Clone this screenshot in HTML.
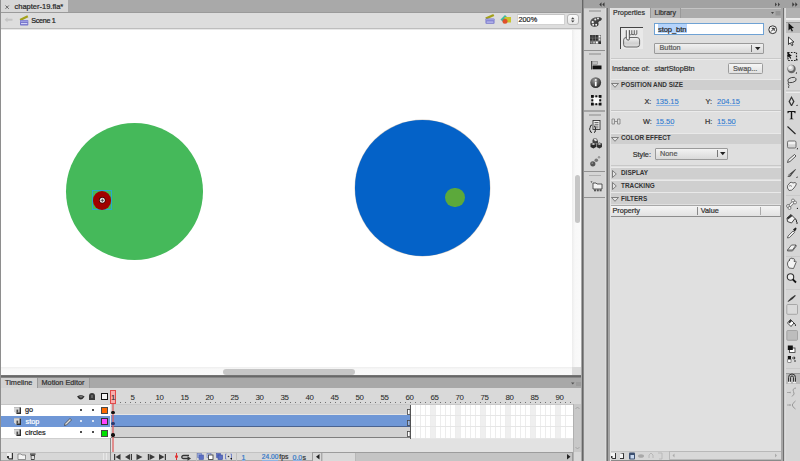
<!DOCTYPE html>
<html><head><meta charset="utf-8">
<style>
*{margin:0;padding:0;box-sizing:border-box}
html,body{width:800px;height:461px;overflow:hidden;background:#d9d9d9;font-family:"Liberation Sans",sans-serif;font-size:7.3px;color:#2b2b2b}
.a{position:absolute}
.t{position:absolute;white-space:nowrap;line-height:1;-webkit-text-stroke:0.22px currentColor}
.hd{position:absolute;left:610px;width:171px;background:#cfcfcf;border-top:1px solid #e9e9e9}
.hdt{position:absolute;white-space:nowrap;line-height:1;font-weight:bold;font-size:6.4px;color:#333;left:621px}
.tri{position:absolute;left:612px}
.val{position:absolute;white-space:nowrap;line-height:1;font-size:7.5px;color:#2f7ad0;border-bottom:1px solid #8fb5e3;-webkit-text-stroke:0.1px currentColor}
svg{position:absolute;overflow:visible}
</style></head><body>
<!-- ============ DOCUMENT AREA ============ -->
<div class="a" style="left:0;top:0;width:582px;height:376px;background:#fff"></div>
<div class="a" style="left:0;top:0;width:1px;height:461px;background:#8e8e8e"></div>
<!-- tab bar -->
<div class="a" style="left:1px;top:0;width:581px;height:13px;background:#a9a9a9"></div>
<div class="a" style="left:1px;top:0;width:67px;height:12px;background:#d7d7d7"></div>
<div class="a" style="left:1px;top:12px;width:581px;height:1px;background:#9a9a9a"></div>
<svg style="left:5px;top:4.8px" width="5" height="5"><path d="M0.5 0.5L3.8 3.8M3.8 0.5L0.5 3.8" stroke="#666" stroke-width="1"/></svg>
<div class="t" style="left:14.5px;top:2.6px;font-size:7.5px;color:#2a2a2a">chapter-19.fla*</div>
<!-- scene bar -->
<div class="a" style="left:1px;top:13px;width:581px;height:16px;background:#dddddd"></div>
<div class="a" style="left:1px;top:28px;width:581px;height:1px;background:#bdbdbd"></div>
<div class="a" style="left:1px;top:29px;width:581px;height:1px;background:#e8e8e8"></div>
<svg style="left:4px;top:17px" width="9" height="6"><path d="M0.5 2.8L3.5 0.3V1.8H8.5V3.8H3.5V5.3Z" fill="#c4c4c4"/></svg>
<svg style="left:19px;top:14.5px" width="10" height="11"><path d="M0.6 4L8.3 0.3L9.3 2.2L1.6 5.9Z" fill="#a3a01a"/><rect x="1" y="5" width="8.3" height="5.6" rx="0.8" fill="#7474cc"/><rect x="1.5" y="5.5" width="7.3" height="1.6" fill="#9c9ce0"/><rect x="2" y="8.2" width="6.3" height="0.9" fill="#e8e8ff"/></svg>
<div class="t" style="left:31.3px;top:17.3px;font-size:7.2px;color:#222;letter-spacing:-0.3px">Scene 1</div>
<!-- scene bar right icons -->
<svg style="left:485px;top:14px" width="10" height="10"><path d="M0.3 3.6L8.3 0L9.3 1.9L1.3 5.5Z" fill="#a3a01a"/><rect x="0.5" y="4.5" width="9" height="5.3" rx="0.8" fill="#7474cc"/><rect x="1" y="5" width="8" height="1.5" fill="#9c9ce0"/><rect x="1.5" y="7.6" width="7" height="0.9" fill="#e8e8ff"/></svg>
<svg style="left:500px;top:14px" width="12" height="10"><path d="M0.5 5.5L5 1L7 3L2.5 7.5Z" fill="#3fb7a0"/><rect x="4.5" y="3" width="6.5" height="5.5" fill="#c8c42a"/><circle cx="5" cy="7.2" r="2.5" fill="#e0502a"/></svg>
<!-- stage scrollbars -->
<div class="a" style="left:572px;top:30px;width:10px;height:337px;background:linear-gradient(90deg,#ededed,#f8f8f8 30%,#fafafa)"></div>
<div class="a" style="left:575px;top:175px;width:5px;height:48px;background:#c6c6c6;border-radius:3px"></div>
<div class="a" style="left:1px;top:367px;width:571px;height:8px;background:linear-gradient(180deg,#eeeeee,#f8f8f8 30%,#fafafa)"></div>
<div class="a" style="left:222.5px;top:369px;width:132px;height:5.5px;background:#c6c6c6;border-radius:3px"></div>
<div class="a" style="left:572px;top:367px;width:9px;height:8.5px;background:#dcdcdc"></div>
<!-- zoom -->
<div class="a" style="left:517px;top:14px;width:48px;height:11px;background:#fff;border:1px solid #d2d2d2;border-top-color:#c4c4c4"></div>
<div class="t" style="left:518.5px;top:16px;font-size:7.3px;color:#2a2a2a">200%</div>
<div class="a" style="left:567px;top:14px;width:12px;height:11px;background:linear-gradient(#fbfbfb,#e8e8e8);border:1px solid #b5b5b5;border-radius:3px"></div>
<svg style="left:571px;top:16.5px" width="4" height="6"><path d="M0 2.3L1.75 0.3L3.5 2.3ZM0 3.5L1.75 5.5L3.5 3.5Z" fill="#444"/></svg>

<!-- stage objects -->
<div class="a" style="left:65.8px;top:123px;width:137.3px;height:137.3px;border-radius:50%;background:#45b95a"></div>
<div class="a" style="left:92px;top:190px;width:20px;height:20px;border:1px solid #2aa9c9"></div>
<div class="a" style="left:92.8px;top:191px;width:18.5px;height:18.5px;border-radius:50%;background:#a00000"></div>
<svg style="left:98px;top:196px" width="9" height="9"><circle cx="4.3" cy="4.3" r="3.3" fill="#3a0000"/><circle cx="4.3" cy="4.3" r="2.5" fill="#f2f2f2"/><path d="M2.6 4.3H6M4.3 2.6V6" stroke="#333" stroke-width="0.8"/></svg>
<div class="a" style="left:354.5px;top:120.3px;width:135.7px;height:135.7px;border-radius:50%;background:#0462c8;box-shadow:0 0 0.6px 0.4px rgba(150,130,110,0.45)"></div>
<div class="a" style="left:445.3px;top:187.9px;width:19.5px;height:19.5px;border-radius:50%;background:#5ca93b"></div>

<!-- ============ DIVIDER ============ -->
<div class="a" style="left:581px;top:0;width:1px;height:461px;background:#a8a8a8"></div><div class="a" style="left:582px;top:0;width:1px;height:461px;background:#666"></div><div class="a" style="left:583px;top:0;width:1px;height:461px;background:#8c8c8c"></div><div class="a" style="left:584px;top:8px;width:1px;height:453px;background:#dadada"></div>

<!-- ============ TIMELINE ============ -->
<div class="a" style="left:1px;top:375.3px;width:580px;height:2.7px;background:linear-gradient(#7a7a7a,#666 55%,#9a9a9a)"></div>
<div class="a" style="left:1px;top:378px;width:580px;height:10.5px;background:#a8a8a8"></div>
<div class="a" style="left:1px;top:378px;width:36px;height:10.5px;background:#d3d3d3"></div>
<div class="a" style="left:37px;top:378px;width:53px;height:10.5px;background:#b9b9b9;border-left:1px solid #9a9a9a;border-right:1px solid #9a9a9a"></div>
<div class="t" style="left:5px;top:379px;color:#333">Timeline</div>
<div class="t" style="left:41.5px;top:379px;color:#333">Motion Editor</div>
<svg style="left:571px;top:382px" width="10" height="4"><path d="M0 0.5H3.5L1.75 2.5Z" fill="#555"/><rect x="5" y="0" width="5" height="4" fill="#9c9c9c"/></svg>
<div class="a" style="left:1px;top:388.3px;width:580px;height:16.2px;background:#d9d9d9"></div>
<div class="a" style="left:1px;top:403.6px;width:109px;height:0.9px;background:#c6c6c6"></div>
<div class="a" style="left:1px;top:438px;width:572px;height:14px;background:#e2e2e2"></div>
<!-- header icons -->
<svg style="left:76.5px;top:393.5px" width="8" height="6"><path d="M0 2.4Q3.8 -0.6 7.6 2.4Q5.5 5.5 3.8 5.5Q2 5.5 0 2.4Z" fill="#2e2e2e"/><ellipse cx="4" cy="2.6" rx="1.6" ry="1.2" fill="#777"/></svg>
<svg style="left:89px;top:393px" width="6" height="7"><path d="M0 7V3Q0 0 3 0Q6 0 6 3V7Z" fill="#3a3a3a"/><rect x="2.3" y="2" width="1.4" height="3" fill="#777"/></svg>
<div class="a" style="left:100.8px;top:393.4px;width:7px;height:7px;border:1.5px solid #111;background:#f4f4f4"></div>
<!-- ruler -->
<div class="a" style="left:120px;top:401.6px;width:0.9px;height:1.6px;background:#707070"></div>
<div class="a" style="left:125px;top:401.6px;width:0.9px;height:1.6px;background:#707070"></div>
<div class="a" style="left:130px;top:401.6px;width:0.9px;height:1.6px;background:#707070"></div>
<div class="a" style="left:135px;top:401.6px;width:0.9px;height:1.6px;background:#707070"></div>
<div class="a" style="left:140px;top:401.6px;width:0.9px;height:1.6px;background:#707070"></div>
<div class="a" style="left:145px;top:401.6px;width:0.9px;height:1.6px;background:#707070"></div>
<div class="a" style="left:150px;top:401.6px;width:0.9px;height:1.6px;background:#707070"></div>
<div class="a" style="left:155px;top:401.6px;width:0.9px;height:1.6px;background:#707070"></div>
<div class="a" style="left:160px;top:401.6px;width:0.9px;height:1.6px;background:#707070"></div>
<div class="a" style="left:165px;top:401.6px;width:0.9px;height:1.6px;background:#707070"></div>
<div class="a" style="left:170px;top:401.6px;width:0.9px;height:1.6px;background:#707070"></div>
<div class="a" style="left:175px;top:401.6px;width:0.9px;height:1.6px;background:#707070"></div>
<div class="a" style="left:180px;top:401.6px;width:0.9px;height:1.6px;background:#707070"></div>
<div class="a" style="left:185px;top:401.6px;width:0.9px;height:1.6px;background:#707070"></div>
<div class="a" style="left:190px;top:401.6px;width:0.9px;height:1.6px;background:#707070"></div>
<div class="a" style="left:195px;top:401.6px;width:0.9px;height:1.6px;background:#707070"></div>
<div class="a" style="left:200px;top:401.6px;width:0.9px;height:1.6px;background:#707070"></div>
<div class="a" style="left:205px;top:401.6px;width:0.9px;height:1.6px;background:#707070"></div>
<div class="a" style="left:210px;top:401.6px;width:0.9px;height:1.6px;background:#707070"></div>
<div class="a" style="left:215px;top:401.6px;width:0.9px;height:1.6px;background:#707070"></div>
<div class="a" style="left:220px;top:401.6px;width:0.9px;height:1.6px;background:#707070"></div>
<div class="a" style="left:225px;top:401.6px;width:0.9px;height:1.6px;background:#707070"></div>
<div class="a" style="left:230px;top:401.6px;width:0.9px;height:1.6px;background:#707070"></div>
<div class="a" style="left:235px;top:401.6px;width:0.9px;height:1.6px;background:#707070"></div>
<div class="a" style="left:240px;top:401.6px;width:0.9px;height:1.6px;background:#707070"></div>
<div class="a" style="left:245px;top:401.6px;width:0.9px;height:1.6px;background:#707070"></div>
<div class="a" style="left:250px;top:401.6px;width:0.9px;height:1.6px;background:#707070"></div>
<div class="a" style="left:255px;top:401.6px;width:0.9px;height:1.6px;background:#707070"></div>
<div class="a" style="left:260px;top:401.6px;width:0.9px;height:1.6px;background:#707070"></div>
<div class="a" style="left:265px;top:401.6px;width:0.9px;height:1.6px;background:#707070"></div>
<div class="a" style="left:270px;top:401.6px;width:0.9px;height:1.6px;background:#707070"></div>
<div class="a" style="left:275px;top:401.6px;width:0.9px;height:1.6px;background:#707070"></div>
<div class="a" style="left:280px;top:401.6px;width:0.9px;height:1.6px;background:#707070"></div>
<div class="a" style="left:285px;top:401.6px;width:0.9px;height:1.6px;background:#707070"></div>
<div class="a" style="left:290px;top:401.6px;width:0.9px;height:1.6px;background:#707070"></div>
<div class="a" style="left:295px;top:401.6px;width:0.9px;height:1.6px;background:#707070"></div>
<div class="a" style="left:300px;top:401.6px;width:0.9px;height:1.6px;background:#707070"></div>
<div class="a" style="left:305px;top:401.6px;width:0.9px;height:1.6px;background:#707070"></div>
<div class="a" style="left:310px;top:401.6px;width:0.9px;height:1.6px;background:#707070"></div>
<div class="a" style="left:315px;top:401.6px;width:0.9px;height:1.6px;background:#707070"></div>
<div class="a" style="left:320px;top:401.6px;width:0.9px;height:1.6px;background:#707070"></div>
<div class="a" style="left:325px;top:401.6px;width:0.9px;height:1.6px;background:#707070"></div>
<div class="a" style="left:330px;top:401.6px;width:0.9px;height:1.6px;background:#707070"></div>
<div class="a" style="left:335px;top:401.6px;width:0.9px;height:1.6px;background:#707070"></div>
<div class="a" style="left:340px;top:401.6px;width:0.9px;height:1.6px;background:#707070"></div>
<div class="a" style="left:345px;top:401.6px;width:0.9px;height:1.6px;background:#707070"></div>
<div class="a" style="left:350px;top:401.6px;width:0.9px;height:1.6px;background:#707070"></div>
<div class="a" style="left:355px;top:401.6px;width:0.9px;height:1.6px;background:#707070"></div>
<div class="a" style="left:360px;top:401.6px;width:0.9px;height:1.6px;background:#707070"></div>
<div class="a" style="left:365px;top:401.6px;width:0.9px;height:1.6px;background:#707070"></div>
<div class="a" style="left:370px;top:401.6px;width:0.9px;height:1.6px;background:#707070"></div>
<div class="a" style="left:375px;top:401.6px;width:0.9px;height:1.6px;background:#707070"></div>
<div class="a" style="left:380px;top:401.6px;width:0.9px;height:1.6px;background:#707070"></div>
<div class="a" style="left:385px;top:401.6px;width:0.9px;height:1.6px;background:#707070"></div>
<div class="a" style="left:390px;top:401.6px;width:0.9px;height:1.6px;background:#707070"></div>
<div class="a" style="left:395px;top:401.6px;width:0.9px;height:1.6px;background:#707070"></div>
<div class="a" style="left:400px;top:401.6px;width:0.9px;height:1.6px;background:#707070"></div>
<div class="a" style="left:405px;top:401.6px;width:0.9px;height:1.6px;background:#707070"></div>
<div class="a" style="left:410px;top:401.6px;width:0.9px;height:1.6px;background:#707070"></div>
<div class="a" style="left:415px;top:401.6px;width:0.9px;height:1.6px;background:#707070"></div>
<div class="a" style="left:420px;top:401.6px;width:0.9px;height:1.6px;background:#707070"></div>
<div class="a" style="left:425px;top:401.6px;width:0.9px;height:1.6px;background:#707070"></div>
<div class="a" style="left:430px;top:401.6px;width:0.9px;height:1.6px;background:#707070"></div>
<div class="a" style="left:435px;top:401.6px;width:0.9px;height:1.6px;background:#707070"></div>
<div class="a" style="left:440px;top:401.6px;width:0.9px;height:1.6px;background:#707070"></div>
<div class="a" style="left:445px;top:401.6px;width:0.9px;height:1.6px;background:#707070"></div>
<div class="a" style="left:450px;top:401.6px;width:0.9px;height:1.6px;background:#707070"></div>
<div class="a" style="left:455px;top:401.6px;width:0.9px;height:1.6px;background:#707070"></div>
<div class="a" style="left:460px;top:401.6px;width:0.9px;height:1.6px;background:#707070"></div>
<div class="a" style="left:465px;top:401.6px;width:0.9px;height:1.6px;background:#707070"></div>
<div class="a" style="left:470px;top:401.6px;width:0.9px;height:1.6px;background:#707070"></div>
<div class="a" style="left:475px;top:401.6px;width:0.9px;height:1.6px;background:#707070"></div>
<div class="a" style="left:480px;top:401.6px;width:0.9px;height:1.6px;background:#707070"></div>
<div class="a" style="left:485px;top:401.6px;width:0.9px;height:1.6px;background:#707070"></div>
<div class="a" style="left:490px;top:401.6px;width:0.9px;height:1.6px;background:#707070"></div>
<div class="a" style="left:495px;top:401.6px;width:0.9px;height:1.6px;background:#707070"></div>
<div class="a" style="left:500px;top:401.6px;width:0.9px;height:1.6px;background:#707070"></div>
<div class="a" style="left:505px;top:401.6px;width:0.9px;height:1.6px;background:#707070"></div>
<div class="a" style="left:510px;top:401.6px;width:0.9px;height:1.6px;background:#707070"></div>
<div class="a" style="left:515px;top:401.6px;width:0.9px;height:1.6px;background:#707070"></div>
<div class="a" style="left:520px;top:401.6px;width:0.9px;height:1.6px;background:#707070"></div>
<div class="a" style="left:525px;top:401.6px;width:0.9px;height:1.6px;background:#707070"></div>
<div class="a" style="left:530px;top:401.6px;width:0.9px;height:1.6px;background:#707070"></div>
<div class="a" style="left:535px;top:401.6px;width:0.9px;height:1.6px;background:#707070"></div>
<div class="a" style="left:540px;top:401.6px;width:0.9px;height:1.6px;background:#707070"></div>
<div class="a" style="left:545px;top:401.6px;width:0.9px;height:1.6px;background:#707070"></div>
<div class="a" style="left:550px;top:401.6px;width:0.9px;height:1.6px;background:#707070"></div>
<div class="a" style="left:555px;top:401.6px;width:0.9px;height:1.6px;background:#707070"></div>
<div class="a" style="left:560px;top:401.6px;width:0.9px;height:1.6px;background:#707070"></div>
<div class="a" style="left:565px;top:401.6px;width:0.9px;height:1.6px;background:#707070"></div>
<div class="a" style="left:570px;top:401.6px;width:0.9px;height:1.6px;background:#707070"></div>
<div class="a" style="left:110px;top:404px;width:463px;height:0.6px;background:#c8c8c8"></div>
<div class="t" style="left:130.5px;top:394px;font-size:7.9px;color:#2a2a2a;letter-spacing:-0.35px;-webkit-text-stroke:0.05px #222">5</div>
<div class="t" style="left:155.5px;top:394px;font-size:7.9px;color:#2a2a2a;letter-spacing:-0.35px;-webkit-text-stroke:0.05px #222">10</div>
<div class="t" style="left:180.5px;top:394px;font-size:7.9px;color:#2a2a2a;letter-spacing:-0.35px;-webkit-text-stroke:0.05px #222">15</div>
<div class="t" style="left:205.5px;top:394px;font-size:7.9px;color:#2a2a2a;letter-spacing:-0.35px;-webkit-text-stroke:0.05px #222">20</div>
<div class="t" style="left:230.5px;top:394px;font-size:7.9px;color:#2a2a2a;letter-spacing:-0.35px;-webkit-text-stroke:0.05px #222">25</div>
<div class="t" style="left:255.5px;top:394px;font-size:7.9px;color:#2a2a2a;letter-spacing:-0.35px;-webkit-text-stroke:0.05px #222">30</div>
<div class="t" style="left:280.5px;top:394px;font-size:7.9px;color:#2a2a2a;letter-spacing:-0.35px;-webkit-text-stroke:0.05px #222">35</div>
<div class="t" style="left:305.5px;top:394px;font-size:7.9px;color:#2a2a2a;letter-spacing:-0.35px;-webkit-text-stroke:0.05px #222">40</div>
<div class="t" style="left:330.5px;top:394px;font-size:7.9px;color:#2a2a2a;letter-spacing:-0.35px;-webkit-text-stroke:0.05px #222">45</div>
<div class="t" style="left:355.5px;top:394px;font-size:7.9px;color:#2a2a2a;letter-spacing:-0.35px;-webkit-text-stroke:0.05px #222">50</div>
<div class="t" style="left:380.5px;top:394px;font-size:7.9px;color:#2a2a2a;letter-spacing:-0.35px;-webkit-text-stroke:0.05px #222">55</div>
<div class="t" style="left:405.5px;top:394px;font-size:7.9px;color:#2a2a2a;letter-spacing:-0.35px;-webkit-text-stroke:0.05px #222">60</div>
<div class="t" style="left:430.5px;top:394px;font-size:7.9px;color:#2a2a2a;letter-spacing:-0.35px;-webkit-text-stroke:0.05px #222">65</div>
<div class="t" style="left:455.5px;top:394px;font-size:7.9px;color:#2a2a2a;letter-spacing:-0.35px;-webkit-text-stroke:0.05px #222">70</div>
<div class="t" style="left:480.5px;top:394px;font-size:7.9px;color:#2a2a2a;letter-spacing:-0.35px;-webkit-text-stroke:0.05px #222">75</div>
<div class="t" style="left:505.5px;top:394px;font-size:7.9px;color:#2a2a2a;letter-spacing:-0.35px;-webkit-text-stroke:0.05px #222">80</div>
<div class="t" style="left:530.5px;top:394px;font-size:7.9px;color:#2a2a2a;letter-spacing:-0.35px;-webkit-text-stroke:0.05px #222">85</div>
<div class="t" style="left:555.5px;top:394px;font-size:7.9px;color:#2a2a2a;letter-spacing:-0.35px;-webkit-text-stroke:0.05px #222">90</div>

<!-- layers -->
<div class="a" style="left:1px;top:404.5px;width:109px;height:11px;background:#fff"></div>
<div class="a" style="left:1px;top:415.5px;width:109px;height:11px;background:#6f97d6"></div>
<div class="a" style="left:1px;top:426.5px;width:109px;height:11px;background:#fff"></div>
<div class="a" style="left:1px;top:437.5px;width:109px;height:1px;background:#cfcfcf"></div>
<svg style="left:14px;top:407.0px" width="8" height="8"><path d="M0 0H7V7H2.5L0 4.5Z" fill="#d6d6d6"/><path d="M0 0H6V1H0Z" fill="#bcbcbc"/><path d="M5.6 0.5H7V7H2.5V5.6H5.6Z" fill="#303030"/><path d="M2.5 2.6H4.2V5.6H2.5Z" fill="#4a4a4a"/></svg>
<svg style="left:14px;top:418.0px" width="8" height="8"><path d="M0 0H7V7H2.5L0 4.5Z" fill="#d6d6d6"/><path d="M0 0H6V1H0Z" fill="#bcbcbc"/><path d="M5.6 0.5H7V7H2.5V5.6H5.6Z" fill="#303030"/><path d="M2.5 2.6H4.2V5.6H2.5Z" fill="#4a4a4a"/></svg>
<svg style="left:14px;top:429.0px" width="8" height="8"><path d="M0 0H7V7H2.5L0 4.5Z" fill="#d6d6d6"/><path d="M0 0H6V1H0Z" fill="#bcbcbc"/><path d="M5.6 0.5H7V7H2.5V5.6H5.6Z" fill="#303030"/><path d="M2.5 2.6H4.2V5.6H2.5Z" fill="#4a4a4a"/></svg>
<div class="t" style="left:25px;top:406.3px;color:#222">go</div>
<div class="t" style="left:25.5px;top:417.8px;color:#fff">stop</div>
<div class="t" style="left:25px;top:428.8px;color:#222">circles</div>
<svg style="left:64px;top:417.5px" width="8" height="8"><path d="M0.5 7.5L1 5.5L6 0.5L7.5 2L2.5 7Z" fill="#ddd" stroke="#333" stroke-width="0.7"/></svg>
<div class="a" style="left:79.5px;top:409.2px;width:2.3px;height:2.3px;border-radius:50%;background:#111"></div>
<div class="a" style="left:91.5px;top:409.2px;width:2.3px;height:2.3px;border-radius:50%;background:#111"></div>
<div class="a" style="left:79.5px;top:420.2px;width:2.3px;height:2.3px;border-radius:50%;background:#fff"></div>
<div class="a" style="left:91.5px;top:420.2px;width:2.3px;height:2.3px;border-radius:50%;background:#fff"></div>
<div class="a" style="left:79.5px;top:431.2px;width:2.3px;height:2.3px;border-radius:50%;background:#111"></div>
<div class="a" style="left:91.5px;top:431.2px;width:2.3px;height:2.3px;border-radius:50%;background:#111"></div>
<div class="a" style="left:101px;top:407px;width:7px;height:7px;background:#ff6a00;border:1px solid #4a4a4a"></div>
<div class="a" style="left:101px;top:418px;width:7px;height:7px;background:#ff44ff;border:1px solid #333"></div>
<div class="a" style="left:101px;top:429.5px;width:7px;height:7px;background:#00e000;border:1px solid #4a4a4a"></div>

<!-- frames -->
<div class="a" style="left:110px;top:404px;width:1px;height:48px;background:#ececec"></div>
<div class="a" style="left:411px;top:404.5px;width:162px;height:33.5px;background:#fff"></div>
<div class="a" style="left:430px;top:404.5px;width:5px;height:33.5px;background:#efefef"></div>
<div class="a" style="left:455px;top:404.5px;width:5px;height:33.5px;background:#efefef"></div>
<div class="a" style="left:480px;top:404.5px;width:5px;height:33.5px;background:#efefef"></div>
<div class="a" style="left:505px;top:404.5px;width:5px;height:33.5px;background:#efefef"></div>
<div class="a" style="left:530px;top:404.5px;width:5px;height:33.5px;background:#efefef"></div>
<div class="a" style="left:555px;top:404.5px;width:5px;height:33.5px;background:#efefef"></div>
<div class="a" style="left:415px;top:404.5px;width:1px;height:33.5px;background:#ededed"></div>
<div class="a" style="left:420px;top:404.5px;width:1px;height:33.5px;background:#ededed"></div>
<div class="a" style="left:425px;top:404.5px;width:1px;height:33.5px;background:#ededed"></div>
<div class="a" style="left:430px;top:404.5px;width:1px;height:33.5px;background:#ededed"></div>
<div class="a" style="left:435px;top:404.5px;width:1px;height:33.5px;background:#ededed"></div>
<div class="a" style="left:440px;top:404.5px;width:1px;height:33.5px;background:#ededed"></div>
<div class="a" style="left:445px;top:404.5px;width:1px;height:33.5px;background:#ededed"></div>
<div class="a" style="left:450px;top:404.5px;width:1px;height:33.5px;background:#ededed"></div>
<div class="a" style="left:455px;top:404.5px;width:1px;height:33.5px;background:#ededed"></div>
<div class="a" style="left:460px;top:404.5px;width:1px;height:33.5px;background:#ededed"></div>
<div class="a" style="left:465px;top:404.5px;width:1px;height:33.5px;background:#ededed"></div>
<div class="a" style="left:470px;top:404.5px;width:1px;height:33.5px;background:#ededed"></div>
<div class="a" style="left:475px;top:404.5px;width:1px;height:33.5px;background:#ededed"></div>
<div class="a" style="left:480px;top:404.5px;width:1px;height:33.5px;background:#ededed"></div>
<div class="a" style="left:485px;top:404.5px;width:1px;height:33.5px;background:#ededed"></div>
<div class="a" style="left:490px;top:404.5px;width:1px;height:33.5px;background:#ededed"></div>
<div class="a" style="left:495px;top:404.5px;width:1px;height:33.5px;background:#ededed"></div>
<div class="a" style="left:500px;top:404.5px;width:1px;height:33.5px;background:#ededed"></div>
<div class="a" style="left:505px;top:404.5px;width:1px;height:33.5px;background:#ededed"></div>
<div class="a" style="left:510px;top:404.5px;width:1px;height:33.5px;background:#ededed"></div>
<div class="a" style="left:515px;top:404.5px;width:1px;height:33.5px;background:#ededed"></div>
<div class="a" style="left:520px;top:404.5px;width:1px;height:33.5px;background:#ededed"></div>
<div class="a" style="left:525px;top:404.5px;width:1px;height:33.5px;background:#ededed"></div>
<div class="a" style="left:530px;top:404.5px;width:1px;height:33.5px;background:#ededed"></div>
<div class="a" style="left:535px;top:404.5px;width:1px;height:33.5px;background:#ededed"></div>
<div class="a" style="left:540px;top:404.5px;width:1px;height:33.5px;background:#ededed"></div>
<div class="a" style="left:545px;top:404.5px;width:1px;height:33.5px;background:#ededed"></div>
<div class="a" style="left:550px;top:404.5px;width:1px;height:33.5px;background:#ededed"></div>
<div class="a" style="left:555px;top:404.5px;width:1px;height:33.5px;background:#ededed"></div>
<div class="a" style="left:560px;top:404.5px;width:1px;height:33.5px;background:#ededed"></div>
<div class="a" style="left:565px;top:404.5px;width:1px;height:33.5px;background:#ededed"></div>
<div class="a" style="left:411px;top:415px;width:162px;height:1px;background:#e6e6e6"></div>
<div class="a" style="left:411px;top:426px;width:162px;height:1px;background:#e6e6e6"></div>
<div class="a" style="left:411px;top:437.5px;width:162px;height:1px;background:#e6e6e6"></div>
<div class="a" style="left:110.5px;top:404.5px;width:300px;height:10px;background:#d2d2d2"></div>
<div class="a" style="left:110.5px;top:414.3px;width:300px;height:0.8px;background:#e4e4e4"></div>
<div class="a" style="left:110.5px;top:415.1px;width:300px;height:10.7px;background:#6f97d6"></div>
<div class="a" style="left:110.5px;top:425.8px;width:300px;height:1.5px;background:#4a6390"></div>
<div class="a" style="left:110.5px;top:427.3px;width:300px;height:9.3px;background:#d2d2d2"></div>
<div class="a" style="left:110.5px;top:436.6px;width:300px;height:1.6px;background:#7e7e7e"></div>
<div class="a" style="left:410px;top:404.5px;width:1px;height:34px;background:#555"></div>
<!-- end frame markers -->
<svg style="left:407px;top:409px" width="4" height="6"><rect x="0.5" y="0.5" width="2.6" height="5" fill="#fff" stroke="#444" stroke-width="0.8"/></svg>
<svg style="left:407px;top:420px" width="4" height="6"><rect x="0.5" y="0.5" width="2.6" height="5" fill="#9ab8e8" stroke="#444" stroke-width="0.8"/></svg>
<svg style="left:407px;top:431px" width="4" height="6"><rect x="0.5" y="0.5" width="2.6" height="5" fill="#fff" stroke="#444" stroke-width="0.8"/></svg>
<!-- keyframe dots -->
<div class="a" style="left:111.8px;top:403px;width:2px;height:48.5px;background:rgba(222,90,90,0.62)"></div>

<div class="a" style="left:111.3px;top:410.6px;width:3.4px;height:3.4px;border-radius:50%;background:#111"></div>
<div class="a" style="left:111.3px;top:421.8px;width:3.4px;height:3.4px;border-radius:50%;background:#2a3a70"></div>
<div class="a" style="left:111.3px;top:433.3px;width:3.4px;height:3.4px;border-radius:50%;background:#111"></div>
<!-- playhead -->
<div class="a" style="left:110px;top:390px;width:6px;height:13.5px;background:#f8acac;border:1px solid #e04a4a"></div>
<div class="t" style="left:111.2px;top:393.5px;font-size:7px;color:#333">1</div>
<!-- timeline v scrollbar -->
<div class="a" style="left:573px;top:404px;width:8px;height:48px;background:#c8c8c8;border-left:1px solid #b0b0b0"></div>
<svg style="left:575px;top:406px" width="5" height="44"><path d="M0.5 3L2.5 1L4.5 3" fill="none" stroke="#999" stroke-width="0.7"/><path d="M0.5 41L2.5 43L4.5 41" fill="none" stroke="#999" stroke-width="0.7"/></svg>

<!-- bottom toolbar -->
<div class="a" style="left:1px;top:451.5px;width:580px;height:9.5px;background:#d7d7d7;border-top:1px solid #c2c2c2"></div>
<div class="a" style="left:1px;top:460px;width:580px;height:1px;background:#a9a9a9"></div>
<div class="a" style="left:110px;top:438px;width:0.8px;height:23px;background:#8a8a8a"></div>
<div class="a" style="left:102.5px;top:453px;width:4px;height:7px;border-left:1px solid #e8e8e8;border-right:1px solid #e8e8e8"></div>
<svg style="left:6.5px;top:452.5px" width="7" height="7"><path d="M0 0H6V6.5H2L0 4.5Z" fill="#333"/><path d="M0 0H4.8V5.2H2V3H0Z" fill="#f0f0f0"/></svg>
<svg style="left:17.5px;top:453px" width="8" height="7"><path d="M0 1H3L4 2H7.5V6.5H0Z" fill="#f4f4f4" stroke="#555" stroke-width="0.6"/></svg>
<svg style="left:30px;top:452.5px" width="6" height="7"><rect x="0" y="0.5" width="5.5" height="1.2" fill="#333"/><path d="M0.5 2H5L4.5 7H1Z" fill="#444"/><rect x="1.5" y="3" width="2.5" height="3" fill="#ddd"/></svg>
<!-- playback controls -->
<svg style="left:114px;top:453.5px" width="55" height="7" fill="#3a3a3a">
<rect x="0" y="0" width="1.2" height="6"/><path d="M1.5 3L6.5 0V6Z"/>
<path d="M11 3L16 0V6Z"/><rect x="16.8" y="0" width="1.2" height="6"/>
<path d="M22.5 0V6L28.5 3Z"/>
<rect x="33.8" y="0" width="1.2" height="6"/><path d="M35.5 0V6L41 3Z"/>
<path d="M45 0V6L50.5 3Z"/><rect x="50.8" y="0" width="1.2" height="6"/>
</svg>
<div class="a" style="left:176px;top:453px;width:1.2px;height:7px;background:#e03030"></div>
<div class="a" style="left:175px;top:455px;width:3px;height:3px;border-radius:50%;background:#e03030"></div>
<svg style="left:181px;top:453.5px" width="11" height="6"><path d="M8 1.5H2.5Q0.8 1.5 0.8 3Q0.8 4.5 2.5 4.5H7" fill="none" stroke="#333" stroke-width="1.3"/><path d="M6.5 2.3L10 4.5L6.5 6.7Z" fill="#333"/></svg>
<div class="a" style="left:195.5px;top:452.5px;width:1px;height:8px;background:#c0c0c0"></div>
<svg style="left:197px;top:453px" width="37" height="7"><rect x="0.5" y="0.5" width="4" height="4" fill="#9fb0e0" stroke="#6a7ab8" stroke-width="0.6"/><rect x="2" y="2" width="4.5" height="4.5" fill="#5c70c4" stroke="#4a5aa8" stroke-width="0.6"/>
<rect x="10" y="0.5" width="4" height="4" fill="#c8d0f0" stroke="#6a7ab8" stroke-width="0.6"/><rect x="11.5" y="2" width="4.5" height="4.5" fill="#fff" stroke="#333" stroke-width="0.8"/>
<rect x="19.5" y="0.5" width="4" height="4" fill="#5c70c4" stroke="#4a5aa8" stroke-width="0.6"/><rect x="21" y="2" width="4.5" height="4.5" fill="#5c70c4" stroke="#3a4a98" stroke-width="0.6"/>
<path d="M29.5 1H28.5V6H29.5M33.5 1H34.5V6H33.5" fill="none" stroke="#5c70c4" stroke-width="0.8"/><circle cx="31.5" cy="3.5" r="0.8" fill="#333"/><path d="M33 5L35 7V5Z" fill="#111"/>
</svg>
<div class="a" style="left:236px;top:452.5px;width:1px;height:8px;background:#c0c0c0"></div>
<div class="t" style="left:241.5px;top:453.5px;font-size:7px;color:#3478c8;border-bottom:0.8px solid #8fb5e3;height:7.5px">1</div>
<div class="t" style="left:261.8px;top:453.8px;font-size:6.6px;color:#3478c8;border-bottom:0.8px solid #8fb5e3;height:7.2px">24.00</div>
<div class="t" style="left:279.3px;top:453.5px;font-size:6.8px;color:#333">fps</div>
<div class="t" style="left:292.5px;top:453.5px;font-size:7px;color:#3478c8;border-bottom:0.8px solid #8fb5e3;height:7.5px">0.0</div>
<div class="t" style="left:302.6px;top:453.5px;font-size:7px;color:#333">s</div>
<!-- h scrollbar -->
<div class="a" style="left:312px;top:451.7px;width:261px;height:9.3px;background:#c4c4c4;border:1px solid #9c9c9c;border-bottom:none"></div>
<div class="a" style="left:313px;top:452.7px;width:9px;height:8.3px;background:#d8d8d8;border-right:1px solid #aaa"></div>
<svg style="left:315.5px;top:454px" width="4" height="6"><path d="M3.5 0V5.5L0 2.75Z" fill="#222"/></svg>
<div class="a" style="left:322.5px;top:452.7px;width:33px;height:8.3px;background:#dadada;border-right:1px solid #b8b8b8"></div>
<svg style="left:566.5px;top:454px" width="4" height="6"><path d="M0 0V5.5L3.5 2.75Z" fill="#222"/></svg>
<div class="a" style="left:573px;top:452px;width:8px;height:9px;background:#d8d8d8;border-left:1px solid #b0b0b0"></div>

<!-- ============ ICON COLUMN ============ -->
<div class="a" style="left:583.5px;top:0;width:24px;height:461px;background:#d5d5d5"></div>
<div class="a" style="left:583.5px;top:0;width:216.5px;height:8px;background:#a2a2a2"></div>
<svg style="left:598.5px;top:1.5px" width="7" height="5"><path d="M2.5 0.3L0.3 2.5L2.5 4.7ZM5.5 0.3L3.3 2.5L5.5 4.7Z" fill="#3a3a3a"/></svg>

<!-- group separators -->
<div class="a" style="left:583.5px;top:8px;width:23.5px;height:1px;background:#c6c6c6"></div>
<div class="a" style="left:589px;top:10.2px;width:12px;height:1.6px;background:#b0b0b0"></div>
<svg style="left:589px;top:16px" width="14" height="12"><defs><linearGradient id="pg" x1="0" y1="0" x2="1" y2="1"><stop offset="0" stop-color="#666"/><stop offset="1" stop-color="#1e1e1e"/></linearGradient></defs><path d="M1.2 7Q0.8 3 5.5 1.5Q10.5 0 12.7 2.3Q13.3 4.5 10.3 5.3Q8.6 5.9 9.6 8Q9.6 10.7 5.5 10.8Q1.5 10.8 1.2 7Z" fill="url(#pg)"/><circle cx="3.7" cy="6.2" r="1.1" fill="#f4f4f4"/><circle cx="6.3" cy="3.6" r="1" fill="#e8e8e8"/><circle cx="9" cy="2.6" r="1" fill="#e8e8e8"/><circle cx="4.2" cy="8.8" r="1" fill="#f4f4f4"/><circle cx="7.2" cy="8.8" r="1" fill="#f4f4f4"/></svg>
<svg style="left:590px;top:35px" width="11" height="9"><rect x="0" y="0" width="11" height="9" fill="#2e2e2e"/><path d="M0 3H11M0 6H11M2.75 0V9M5.5 0V9M8.25 0V9" stroke="#8a8a8a" stroke-width="0.6"/><rect x="0" y="0" width="5" height="3" fill="#444" opacity="0.6"/><rect x="8.6" y="0.4" width="2" height="2.2" fill="#fff"/><rect x="8.6" y="3.4" width="2" height="2.2" fill="#ddd"/><rect x="5.9" y="6.4" width="2" height="2.2" fill="#fff"/><rect x="3.1" y="6.4" width="2" height="2.2" fill="#bbb"/><rect x="0.4" y="6.4" width="2" height="2.2" fill="#999"/></svg>
<div class="a" style="left:583.5px;top:49.7px;width:23.5px;height:1.2px;background:#929292"></div>
<div class="a" style="left:589px;top:53.1px;width:12px;height:1.7px;background:#b0b0b0"></div>
<svg style="left:591px;top:60.5px" width="11" height="9"><rect x="0" y="0" width="1" height="8.5" fill="#444"/><rect x="1.5" y="0.5" width="5" height="3" fill="#bbb" stroke="#777" stroke-width="0.5"/><rect x="1.5" y="4.5" width="9" height="3.8" fill="#111"/></svg>
<svg style="left:590px;top:77px" width="12" height="12"><defs><radialGradient id="ig" cx="0.4" cy="0.3" r="0.7"><stop offset="0" stop-color="#9a9a9a"/><stop offset="1" stop-color="#2a2a2a"/></radialGradient></defs><circle cx="5.7" cy="5.6" r="5.4" fill="url(#ig)"/><rect x="4.9" y="4.6" width="1.7" height="4.6" fill="#fff"/><rect x="4.9" y="2.2" width="1.7" height="1.5" fill="#fff"/></svg>
<svg style="left:590.5px;top:95px" width="11" height="11"><rect x="1.5" y="1.5" width="7.5" height="7.5" fill="#fafafa" stroke="#777" stroke-width="0.5" stroke-dasharray="1 1"/><g fill="#111"><rect x="0" y="0" width="2.8" height="2.8"/><rect x="7.7" y="0" width="2.8" height="2.8"/><rect x="0" y="7.7" width="2.8" height="2.8"/><rect x="7.7" y="7.7" width="2.8" height="2.8"/><rect x="4.3" y="0.3" width="2" height="2"/><rect x="4.3" y="8.2" width="2" height="2"/><rect x="0.3" y="4.3" width="2" height="2"/><rect x="8.2" y="4.3" width="2" height="2"/></g></svg>
<div class="a" style="left:583.5px;top:110.1px;width:23.5px;height:1.5px;background:#a6a6a6"></div>
<div class="a" style="left:589px;top:114px;width:12px;height:1.7px;background:#b0b0b0"></div>
<svg style="left:589px;top:119.5px" width="12" height="13"><rect x="4" y="0.5" width="7" height="9" fill="#f0f0f0" stroke="#333" stroke-width="0.9"/><path d="M5.5 2.5H9.5M5.5 4.3H9.5M5.5 6.1H9.5M5.5 7.9H9.5" stroke="#333" stroke-width="0.7"/><path d="M3 5Q1 5 1.2 7.5Q1 9 0.3 9Q1 9.2 1.2 10.5Q1 12.5 3 12.5M5 6Q6.5 6 6.3 8Q6.5 9.5 7 9.5Q6.5 9.7 6.3 10.5Q6.5 12.5 5 12.5" fill="none" stroke="#222" stroke-width="1"/></svg>
<svg style="left:589.5px;top:138px" width="13" height="11"><path d="M3.5 0.5L6.5 0.5L8 2.5V5L5 5.5L2.5 4.5V2Z" fill="#444"/><path d="M0.5 5.5L3.5 4.5L6 5.5V9L3.5 10.5L0.5 9Z" fill="#2a2a2a"/><path d="M6.5 5.5L9.5 4.5L12 5.5V9L9.5 10.5L6.5 9Z" fill="#333"/><path d="M1 6L3.5 5L5.5 6L3.5 7Z" fill="#ccc"/><path d="M7 6L9.5 5L11.5 6L9.5 7Z" fill="#bbb"/><path d="M3.5 1L6 1L7.5 2.5L5 3.3Z" fill="#ddd"/></svg>
<svg style="left:590px;top:155px" width="11" height="12"><circle cx="2.8" cy="8.8" r="2.6" fill="#555"/><circle cx="6.3" cy="5.3" r="1.8" fill="#777"/><circle cx="9" cy="2.2" r="1.2" fill="#999"/><circle cx="2.3" cy="8.2" r="0.9" fill="#888"/></svg>
<div class="a" style="left:583.5px;top:170.6px;width:23.5px;height:1.2px;background:#929292"></div>
<div class="a" style="left:589px;top:174.6px;width:12px;height:1.6px;background:#b0b0b0"></div>
<svg style="left:589.5px;top:181px" width="13" height="11"><path d="M0.5 0.5H2.5L1.5 1.8Z" fill="#222"/><path d="M3 2H6L7 3H12V8H3Z" fill="#f2f2f2" stroke="#333" stroke-width="0.8"/><rect x="4" y="8.3" width="2" height="2" fill="#555"/><rect x="6.8" y="8.3" width="2" height="2" fill="#555"/><rect x="9.6" y="8.3" width="2" height="2" fill="#555"/></svg>
<div class="a" style="left:583.5px;top:196.8px;width:23.5px;height:1.2px;background:#929292"></div>


<!-- ============ BORDERS ============ -->


<!-- ============ PROPERTIES ============ -->
<div class="a" style="left:610px;top:8px;width:171px;height:453px;background:#dfdfdf"></div>

<!-- tab row -->
<div class="a" style="left:610px;top:8px;width:171px;height:10px;background:#ababab;border-top:0.5px solid #c4c4c4"></div>
<div class="a" style="left:610px;top:8px;width:40px;height:10px;background:#dfdfdf"></div>
<div class="a" style="left:650px;top:8px;width:31px;height:10px;background:#b6b6b6;border-left:1px solid #999;border-right:1px solid #999"></div>
<div class="t" style="left:613px;top:8.9px;font-size:7px;color:#333">Properties</div>
<div class="t" style="left:654.5px;top:8.9px;font-size:7px;color:#333">Library</div>
<svg style="left:771px;top:11px" width="10" height="5"><path d="M0 1H3L1.5 3Z" fill="#444"/><rect x="4.5" y="0" width="5" height="4.5" fill="#959595"/></svg>
<svg style="left:774.5px;top:1.5px" width="6" height="5"><path d="M0 0.5L2 2.5L0 4.5ZM3 0.5L5 2.5L3 4.5Z" fill="#444"/></svg>
<!-- symbol icon -->
<div class="a" style="left:620px;top:26.7px;width:23px;height:22.5px;background:#e9e9e9;border-top:1.3px solid #444;border-left:1.3px solid #444"></div>
<svg style="left:620px;top:26.7px" width="23" height="23"><defs><linearGradient id="bg1" x1="0" y1="0" x2="0" y2="1"><stop offset="0" stop-color="#f4f4f4"/><stop offset="0.6" stop-color="#cfcfcf"/><stop offset="1" stop-color="#e0e0e0"/></linearGradient></defs><rect x="3.6" y="10.5" width="16" height="9.5" rx="2.6" fill="url(#bg1)" stroke="#5a5a5a" stroke-width="0.9"/><path d="M9.3 3.2V7.2Q10.6 8.4 11.8 7.2V3.2M11.8 7.2Q13.1 8.4 14.3 7.2V3.2M14.3 7.2Q15.6 8.4 16.8 7.2V3.2" fill="none" stroke="#555" stroke-width="0.9"/><path d="M6.3 3.2V11.3Q6.8 13.6 8.9 13.1L9.3 12.3V3.2" fill="#f6f6f6" stroke="#444" stroke-width="0.9"/></svg>
<!-- name input -->
<div class="a" style="left:654px;top:23px;width:109.5px;height:12px;background:#fff;border:1.6px solid #6fa2d4"></div>
<div class="a" style="left:657.8px;top:24.4px;width:29.2px;height:9px;background:#b4d3fb"></div>
<div class="t" style="left:658px;top:25.6px;font-size:7.6px;color:#2a2a2a;letter-spacing:-0.1px">stop_btn</div>
<svg style="left:768px;top:25px" width="10" height="10"><circle cx="4.7" cy="4.7" r="3.9" fill="#f4f4f4" stroke="#333" stroke-width="1"/><path d="M3 6.5L6 3.5M3.7 3.3H6.2V5.8" fill="none" stroke="#222" stroke-width="1"/></svg>
<!-- type dropdown -->
<div class="a" style="left:654px;top:42.5px;width:109.5px;height:11px;background:linear-gradient(#f0f0f0,#d8d8d8);border:1px solid #9a9a9a;border-radius:1px"></div>
<div class="t" style="left:659.5px;top:44.2px;font-size:7.3px;color:#5a5a5a">Button</div>
<div class="a" style="left:751px;top:44.5px;width:1px;height:7px;background:#777"></div>
<svg style="left:754.5px;top:46.5px" width="6" height="4"><path d="M0 0H5.5L2.75 3.2Z" fill="#222"/></svg>
<div class="a" style="left:610px;top:58px;width:171px;height:1px;background:#c9c9c9"></div>
<div class="a" style="left:610px;top:59px;width:171px;height:1px;background:#ececec"></div>
<div class="t" style="left:612px;top:64.8px;color:#333">Instance of:</div>
<div class="t" style="left:654.5px;top:64.8px;color:#333">startStopBtn</div>
<div class="a" style="left:728px;top:62.5px;width:34.5px;height:11.5px;background:linear-gradient(#f6f6f6,#e0e0e0);border:1px solid #9c9c9c;border-radius:1.5px"></div>
<div class="t" style="left:733px;top:65px;color:#555">Swap...</div>
<!-- POSITION AND SIZE -->
<div class="hd" style="top:79px;height:11px"></div>
<svg class="tri" style="top:82.5px;left:611px" width="8" height="5"><path d="M0.5 0.5H7.5L4 4.3Z" fill="#e4e4e4" stroke="#666" stroke-width="0.8"/></svg>
<div class="hdt" style="top:81.6px">POSITION AND SIZE</div>
<div class="t" style="left:644.5px;top:97.8px;color:#333">X:</div>
<div class="val" style="left:655.7px;top:97.6px;height:8px">135.15</div>
<div class="t" style="left:705.5px;top:97.8px;color:#333">Y:</div>
<div class="val" style="left:717px;top:97.6px;height:8px">204.15</div>
<div class="a" style="left:610px;top:110px;width:171px;height:1px;background:#c4c4c4"></div>
<div class="a" style="left:610px;top:111px;width:171px;height:1px;background:#ebebeb"></div>
<svg style="left:611px;top:118px" width="10" height="7"><path d="M1 1H3.5V6H1ZM6.5 1H9V6H6.5Z" fill="none" stroke="#888" stroke-width="0.9"/><path d="M3.5 3.5H6.5" stroke="#888" stroke-width="0.9"/></svg>
<div class="t" style="left:643px;top:117.8px;color:#333">W:</div>
<div class="val" style="left:655.7px;top:117.6px;height:8px">15.50</div>
<div class="t" style="left:705px;top:117.8px;color:#333">H:</div>
<div class="val" style="left:717px;top:117.6px;height:8px">15.50</div>
<!-- COLOR EFFECT -->
<div class="hd" style="top:133px;height:11px"></div>
<svg class="tri" style="top:136.5px;left:611px" width="8" height="5"><path d="M0.5 0.5H7.5L4 4.3Z" fill="#e4e4e4" stroke="#666" stroke-width="0.8"/></svg>
<div class="hdt" style="top:135.4px">COLOR EFFECT</div>
<div class="t" style="left:632.7px;top:150.5px;color:#333">Style:</div>
<div class="a" style="left:655px;top:148px;width:73px;height:11.5px;background:linear-gradient(#f2f2f2,#d9d9d9);border:1px solid #9a9a9a;border-radius:1px"></div>
<div class="t" style="left:660px;top:150.3px;color:#5a5a5a">None</div>
<div class="a" style="left:716.5px;top:150px;width:1px;height:7px;background:#777"></div>
<svg style="left:719.5px;top:152px" width="6" height="4"><path d="M0 0H5.5L2.75 3.2Z" fill="#222"/></svg>
<div class="a" style="left:610px;top:165px;width:171px;height:1px;background:#c8c8c8"></div>
<!-- DISPLAY / TRACKING / FILTERS -->
<div class="hd" style="top:167px;height:12px"></div>
<svg class="tri" style="top:169.5px;left:612px" width="5" height="8"><path d="M0.5 0.5V7.5L4.3 4Z" fill="#e4e4e4" stroke="#666" stroke-width="0.8"/></svg>
<div class="hdt" style="top:169.9px">DISPLAY</div>
<div class="hd" style="top:179.5px;height:12px"></div>
<svg class="tri" style="top:182px;left:612px" width="5" height="8"><path d="M0.5 0.5V7.5L4.3 4Z" fill="#e4e4e4" stroke="#666" stroke-width="0.8"/></svg>
<div class="hdt" style="top:183.2px">TRACKING</div>
<div class="hd" style="top:192px;height:12px"></div>
<svg class="tri" style="top:196.5px;left:611px" width="8" height="5"><path d="M0.5 0.5H7.5L4 4.3Z" fill="#e4e4e4" stroke="#666" stroke-width="0.8"/></svg>
<div class="hdt" style="top:195.6px">FILTERS</div>
<!-- filter table -->
<div class="a" style="left:610px;top:204px;width:171px;height:257px;background:#e0e0e0"></div>
<div class="a" style="left:610px;top:205px;width:171px;height:11.5px;background:linear-gradient(#f4f4f4,#e2e2e2);border:1px solid #a8a8a8;border-bottom-color:#8c8c8c"></div>
<div class="t" style="left:612.4px;top:206.9px;color:#333">Property</div>
<div class="a" style="left:697px;top:207px;width:1px;height:8px;background:#888"></div>
<div class="t" style="left:700.7px;top:206.9px;color:#333">Value</div>
<div class="a" style="left:760px;top:207px;width:1px;height:8px;background:#aaa"></div>
<!-- footer -->
<div class="a" style="left:610px;top:451px;width:171px;height:10px;background:#d6d6d6;border-top:1px solid #c4c4c4"></div>
<div class="a" style="left:610px;top:459.5px;width:171px;height:1.5px;background:#8a8a8a"></div>
<svg style="left:610px;top:452px" width="58" height="8">
<path d="M1 1H6V7H2.5L1 5.5Z" fill="#333"/><path d="M1 1H5V6H2.5V4H1Z" fill="#f4f4f4"/>
<path d="M10 2L14 1V7H10Z" fill="#333"/><path d="M10 2H13V6H10Z" fill="#f4f4f4"/>
<rect x="19" y="0.5" width="6" height="7" rx="1" fill="#3c5070"/><rect x="20.5" y="3" width="3.5" height="3.5" fill="#c8d8f0"/>
<ellipse cx="31" cy="4" rx="3" ry="1.8" fill="#a8a8a8"/>
<path d="M39 6V3L41 1L43 3V6" fill="none" stroke="#b0b0b0" stroke-width="0.8"/>
<path d="M48 1H52V7H49" fill="none" stroke="#b4b4b4" stroke-width="0.8"/>
</svg>
<div class="a" style="left:669px;top:451px;width:113px;height:8.5px;background:#d8d8d8;border:1px solid #b8b8b8"></div>
<svg style="left:672px;top:453px" width="106" height="5"><path d="M2.5 0.5V4.5L0.5 2.5Z" fill="#aaa"/><path d="M103 0.5V4.5L105 2.5Z" fill="#aaa"/></svg>



<!-- ============ TOOLS ============ -->
<div class="a" style="left:784.5px;top:8px;width:15.5px;height:453px;background:#d6d6d6"></div>

<svg style="left:792px;top:1.5px" width="7" height="5"><path d="M0.3 0.3L2.5 2.5L0.3 4.7ZM3.3 0.3L5.5 2.5L3.3 4.7Z" fill="#3a3a3a"/></svg>
<div class="a" style="left:784.5px;top:8px;width:15.5px;height:10px;background:#b1b1b1"></div>
<div class="a" style="left:784.5px;top:18px;width:15.5px;height:2px;background:#ececec"></div>
<div class="a" style="left:785.5px;top:21.5px;width:14.5px;height:11px;background:#bcbcbc;border-top:1px solid #9a9a9a"></div>
<svg style="left:786px;top:22px" width="14" height="418">
<!-- arrow -->
<path d="M2.5 1L2.5 8.5L4.3 6.8L5.8 9.6L7 9L5.6 6.2L8 6.1Z" fill="#111"/>
<!-- subselect -->
<path d="M2.5 15L2.5 22.5L4.3 20.8L5.8 23.6L7 23L5.6 20.2L8 20.1Z" fill="#fff" stroke="#111" stroke-width="0.8"/>
<!-- free transform -->
<path d="M2 30.5H10.5V38.5H2Z" fill="none" stroke="#222" stroke-width="1.2" stroke-dasharray="1.6 1.3"/>
<path d="M1.5 30L1.5 36L3 34.6L4.2 36.8L5.2 36.3L4.1 34.1L6 34Z" fill="#111"/>
<path d="M10 38.5H11.5V37" fill="#111"/>
<!-- 3d sphere -->
<circle cx="5.5" cy="47" r="4.2" fill="#666"/><circle cx="4.8" cy="46" r="3" fill="#cfcfcf"/><circle cx="4.3" cy="45.5" r="1.6" fill="#f2f2f2"/>
<path d="M9.5 51.5H11V50Z" fill="#111"/>
<!-- lasso -->
<ellipse cx="6" cy="58" rx="4.3" ry="2.5" fill="none" stroke="#444" stroke-width="0.9" transform="rotate(-15 6 58)"/>
<path d="M2.5 60Q1.5 62 3 63.5Q2 65 2.8 66" fill="none" stroke="#444" stroke-width="0.9"/>
<!-- pen -->
<path d="M5.5 74L8.5 79.5L6 84L5 84L2.5 79.5Z" fill="#333"/><path d="M5.5 76.5L7 79.5L5.5 82.5L4 79.5Z" fill="#ddd"/>
<path d="M10 84H11.5V82.5Z" fill="#111"/>
<!-- T -->
<path d="M1.5 89H9.5V91.2H8.8Q8.5 89.9 7 89.9H6.2V96.4L7.5 96.9V97.3H3.5V96.9L4.8 96.4V89.9H4Q2.5 89.9 2.2 91.2H1.5Z" fill="#111"/>
<!-- line -->
<path d="M1.5 104.5L9.5 112" stroke="#222" stroke-width="1.1"/>
<!-- rect -->
<rect x="1.5" y="119" width="8.5" height="7" rx="1.3" fill="#d4d4d4" stroke="#555" stroke-width="0.8"/><rect x="2.3" y="119.8" width="6.8" height="2.5" fill="#f2f2f2"/>
<path d="M10.5 127.3H12V125.8Z" fill="#111"/>
<!-- pencil -->
<path d="M1.5 140.5L2.3 137.8L8.5 132.5L10 134L4 139.5Z" fill="#f0f0f0" stroke="#333" stroke-width="0.8"/>
<!-- brush -->
<path d="M1.5 155Q2 152 4 151.5L9.5 147L10 147.5L5.5 153Q5 155 1.5 155Z" fill="#444"/><path d="M2 154.5Q3 152.5 4.5 152.5" stroke="#eee" stroke-width="0.6" fill="none"/>
<path d="M10 155.7H11.5V154.2Z" fill="#111"/>
<!-- deco -->
<path d="M1.5 166Q1 163 3 162L4 160.5Q6 160 7 161L9 160.5Q11 161 10 163L8 166Q6 169 3 168.5Z" fill="#f0f0f0" stroke="#444" stroke-width="0.8"/>
<path d="M3 164Q5 163 6 164.5" stroke="#444" stroke-width="0.6" fill="none"/>
<!-- bone -->
<path d="M2.5 185L8 179.5" stroke="#444" stroke-width="3"/><path d="M2.5 185L8 179.5" stroke="#f0f0f0" stroke-width="1.8"/>
<circle cx="2" cy="184" r="1.5" fill="#f0f0f0" stroke="#444" stroke-width="0.6"/><circle cx="3.5" cy="186" r="1.5" fill="#f0f0f0" stroke="#444" stroke-width="0.6"/>
<circle cx="7" cy="178.5" r="1.5" fill="#f0f0f0" stroke="#444" stroke-width="0.6"/><circle cx="9" cy="180.5" r="1.5" fill="#f0f0f0" stroke="#444" stroke-width="0.6"/>
<path d="M10.5 187H12V185.5Z" fill="#111"/>
<!-- bucket -->
<path d="M1 196L5 192.5L9 196.5L5.5 201L1.5 199.5Z" fill="#f4f4f4" stroke="#333" stroke-width="0.9"/><path d="M1 196L5 192.5L6.5 194L2 197.5Z" fill="#333"/><path d="M9 196.5Q11 198 10.5 200" stroke="#222" stroke-width="1" fill="none"/>
<circle cx="11" cy="201" r="0.8" fill="#111"/>
<!-- eyedropper -->
<path d="M1.5 216L2 214L7 209L8.5 210.5L3.5 215.5Z" fill="#f0f0f0" stroke="#333" stroke-width="0.7"/><path d="M7 207.5L9.5 205.5Q10.8 205.5 10.5 207L8.8 209.8Z" fill="#222"/>
<!-- eraser -->
<path d="M1.5 228L5.5 223H10L6.5 228Z" fill="#f2f2f2" stroke="#444" stroke-width="0.8"/><path d="M1.5 228V229H6.5L10 224.5V223" fill="none" stroke="#444" stroke-width="0.7"/>
<!-- hand -->
<path d="M3 246Q1 243 1.5 241L2.5 239Q3 238 3.5 239V237Q4 236 5 237V236.5Q6 235.5 6.7 236.5V237Q7.5 236 8.3 237V240L9.3 239Q10.5 239 10 240.5L7.5 246.5Z" fill="#f4f4f4" stroke="#444" stroke-width="0.8"/>
<!-- zoom -->
<circle cx="4.5" cy="255" r="3.2" fill="#eee" stroke="#333" stroke-width="1.1"/><path d="M6.8 257.3L10 260.5" stroke="#111" stroke-width="1.8"/>
<!-- stroke color pencil -->
<path d="M1.5 279.5Q4 276 9 273L9.8 273.8Q7 277.5 2.5 279.8Z" fill="#333"/>
<!-- stroke swatch -->
<rect x="0.8" y="282.5" width="10.7" height="9.8" rx="1" fill="#dadada" stroke="#9a9a9a" stroke-width="0.8"/>
<!-- fill bucket -->
<path d="M1.5 301L4.5 297.5L8 301L5 304.5Z" fill="#fff" stroke="#333" stroke-width="0.9"/><path d="M2.5 300L4.5 297.5L6 299L3.5 301.5Z" fill="#333"/><path d="M8 301Q9.8 302 9.5 304" stroke="#333" stroke-width="1" fill="none"/>
<!-- fill swatch -->
<rect x="0.8" y="308.5" width="10.7" height="9.8" rx="1" fill="#bdbdbd" stroke="#9a9a9a" stroke-width="0.8"/>
<!-- black white -->
<rect x="3.5" y="326" width="5.5" height="4.5" fill="#fff" stroke="#333" stroke-width="0.8"/><rect x="1.8" y="323.5" width="5" height="4.5" fill="#111"/>
<!-- swap -->
<rect x="1.8" y="334" width="3.2" height="3" fill="#111"/><rect x="1.8" y="337.5" width="3.2" height="3" fill="#fff" stroke="#333" stroke-width="0.5"/>
<path d="M6 336H9L8 334.5M9 336L8 337.5M9 338V340" fill="none" stroke="#222" stroke-width="0.9"/>
</svg>
<div class="a" style="left:784.5px;top:89.6px;width:15.5px;height:1px;background:#c9c9c9"></div>
<div class="a" style="left:784.5px;top:92px;width:15.5px;height:1px;background:#ececec"></div>
<div class="a" style="left:784.5px;top:195px;width:15.5px;height:1px;background:#c9c9c9"></div>
<div class="a" style="left:784.5px;top:255.5px;width:15.5px;height:1px;background:#c9c9c9"></div>
<div class="a" style="left:784.5px;top:289.2px;width:15.5px;height:1px;background:#c9c9c9"></div>
<div class="a" style="left:784.5px;top:368px;width:15.5px;height:1px;background:#c9c9c9"></div>
<div class="a" style="left:785px;top:372.8px;width:15px;height:11.7px;background:#b9b9b9;border-top:1px solid #999"></div>
<svg style="left:786px;top:372px" width="14" height="40">
<path d="M2.5 10.5V5.5Q2.5 2 6 2Q9.5 2 9.5 5.5V10.5H7.5V5.5Q7.5 4 6 4Q4.5 4 4.5 5.5V10.5Z" fill="none" stroke="#333" stroke-width="1"/>
<path d="M2 10.5H5M7 10.5H10" stroke="#eee" stroke-width="1.3"/>
<path d="M1 20.5H4.5" stroke="#999" stroke-width="0.8"/><path d="M3 20.5L4.5 19.5V21.5Z" fill="#999"/>
<path d="M10 16Q6 16.5 7.5 19.5Q9.5 22 6 24.5" fill="none" stroke="#999" stroke-width="1"/>
<path d="M1 33H4.5" stroke="#999" stroke-width="0.8"/><path d="M3 33L4.5 32V34Z" fill="#999"/>
<path d="M9.5 29Q6 32 6.3 33Q6 34.5 9.5 37" fill="none" stroke="#999" stroke-width="1"/>
</svg>

<div class="a" style="left:605px;top:8px;width:1px;height:453px;background:#dcdcdc"></div><div class="a" style="left:606px;top:8px;width:1px;height:453px;background:#9a9a9a"></div><div class="a" style="left:607px;top:8px;width:1px;height:453px;background:#6e6e6e"></div><div class="a" style="left:608px;top:8px;width:2px;height:453px;background:#a5a5a5"></div><div class="a" style="left:610px;top:8px;width:1px;height:453px;background:#e4e4e4"></div>
<div class="a" style="left:781px;top:8px;width:2px;height:453px;background:#a6a6a6"></div><div class="a" style="left:783px;top:8px;width:1px;height:453px;background:#6e6e6e"></div><div class="a" style="left:784px;top:8px;width:1px;height:453px;background:#d0d0d0"></div><div class="a" style="left:785px;top:8px;width:1px;height:453px;background:#dcdcdc"></div>
</body></html>
